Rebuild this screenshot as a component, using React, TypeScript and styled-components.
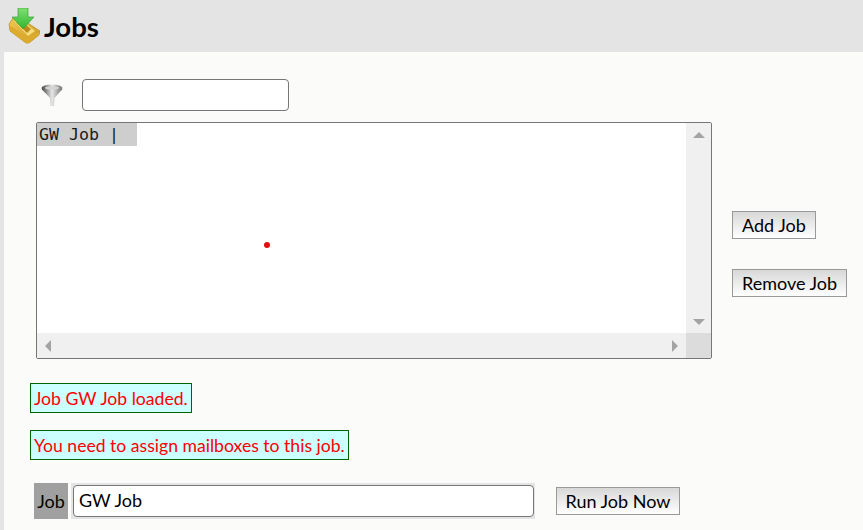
import styled, { createGlobalStyle } from 'styled-components';

const GlobalStyle = createGlobalStyle`
	html, body {
		margin: 0;
		padding: 0;
		background-color: #e4e4e4;
		font-family: Lato, 'Liberation Sans', sans-serif;
	}
`;

const Page = styled.div`
	width: 863px;
	height: 530px;
	overflow: hidden;
	display: flex;
	flex-direction: column;
`;

const Header = styled.div`
	height: 52px;
	display: flex;
	align-items: center;
	padding-left: 8px;
	gap: 4px;
	flex-shrink: 0;
`;

const Title = styled.h1`
	margin: 0;
	font-size: 27.5px;
	font-weight: 700;
	color: #000;
`;

const Content = styled.div`
	flex: 1;
	margin-left: 4px;
	background-color: #fbfbf9;
	padding: 27px 0 0 26px;
`;

const FilterRow = styled.div`
	display: flex;
	align-items: center;
	margin-left: 11px;
	gap: 17px;
	height: 32px;
`;

const TextInput = styled.input<{ $width: number; $height: number }>`
	box-sizing: border-box;
	width: ${(p) => p.$width}px;
	height: ${(p) => p.$height}px;
	border: 1px solid #767676;
	border-radius: 4px;
	background-color: #fff;
	padding: 0 5px 2px;
	font-family: Lato, sans-serif;
	font-size: 18px;
	color: #000;
	outline: none;
`;

const ListRow = styled.div`
	display: flex;
	align-items: center;
	margin: 11px 0 0 6px;
`;

const ListBox = styled.div`
	box-sizing: border-box;
	position: relative;
	width: 676px;
	height: 237px;
	border: 1px solid #767676;
	border-radius: 2px;
	background-color: #fff;
	display: grid;
	grid-template-columns: 1fr 25px;
	grid-template-rows: 1fr 25px;
`;

const ListArea = styled.div`
	overflow: hidden;
`;

const ListItem = styled.div`
	box-sizing: border-box;
	width: 100px;
	height: 23px;
	padding-left: 2px;
	line-height: 24px;
	background-color: #cecece;
	font-family: 'DejaVu Sans Mono', 'Liberation Mono', monospace;
	font-size: 16.6px;
	white-space: pre;
	color: #1a1a1a;
`;

const ScrollV = styled.div`
	background-color: #f0f0f0;
	display: flex;
	flex-direction: column;
	align-items: center;
	justify-content: space-between;
	padding: 9px 0 8px;
`;

const ScrollH = styled.div`
	background-color: #f0f0f0;
	display: flex;
	align-items: center;
	justify-content: space-between;
	padding: 0 8px;
`;

const Corner = styled.div`
	background-color: #dcdcdc;
`;

const Arrow = styled.span<{ $dir: 'up' | 'down' | 'left' | 'right' }>`
	width: 0;
	height: 0;
	border-style: solid;
	border-color: transparent;
	${(p) =>
		p.$dir === 'up'
			? 'border-width: 0 6px 6px; border-bottom-color: #a3a3a3;'
			: p.$dir === 'down'
			? 'border-width: 6px 6px 0; border-top-color: #a3a3a3;'
			: p.$dir === 'left'
			? 'border-width: 6px 6px 6px 0; border-right-color: #a3a3a3;'
			: 'border-width: 6px 0 6px 6px; border-left-color: #a3a3a3;'}
`;

const Dot = styled.span`
	position: absolute;
	left: 227px;
	top: 119px;
	width: 6px;
	height: 6px;
	border-radius: 50%;
	background-color: #e01010;
`;

const ActionColumn = styled.div`
	display: flex;
	flex-direction: column;
	align-items: flex-start;
	gap: 30px;
	margin: 27px 0 0 20px;
`;

const Button = styled.button`
	box-sizing: border-box;
	height: 28px;
	padding: 0 9px;
	border: 1px solid #999;
	border-radius: 0;
	background: linear-gradient(to bottom, #d8d8d8, #fff);
	font-family: Lato, sans-serif;
	font-size: 18px;
	color: #000;
`;

const Messages = styled.div`
	display: flex;
	flex-direction: column;
	align-items: flex-start;
	gap: 17px;
	margin-top: 24px;
`;

const Message = styled.div`
	box-sizing: border-box;
	height: 30px;
	padding: 0 3px;
	line-height: 29px;
	border: 1px solid #006400;
	background-color: #ccffff;
	color: #ff0000;
	font-size: 17.6px;
`;

const JobRow = styled.div`
	display: flex;
	align-items: center;
	margin: 23px 0 0 4px;
`;

const JobLabel = styled.div`
	width: 34px;
	height: 36px;
	line-height: 36px;
	text-align: center;
	background-color: #a0a0a0;
	color: #000;
	font-size: 18px;
`;

const JobField = styled.div`
	display: flex;
	padding: 2px 1px 2px 2px;
	margin-left: 3px;
	background-color: #e4e4e4;
`;

const RunButton = styled(Button)`
	margin-left: 21px;
	padding: 0 8.5px;
`;

const InboxIcon = () => (
	<svg width="32" height="36" viewBox="0 0 32 36">
		<defs>
			<linearGradient id="tray" x1="0" x2="1" y1="0" y2="1">
				<stop offset="0" stopColor="#f0c850" />
				<stop offset="1" stopColor="#c99a24" />
			</linearGradient>
			<linearGradient id="arrow" x1="0" x2="0" y1="0" y2="1">
				<stop offset="0" stopColor="#7fe070" />
				<stop offset="1" stopColor="#2fb52f" />
			</linearGradient>
		</defs>
		<path d="M1 16 L5 10 L12 10 L32 23 L31 27 L21 35 L18 35 L2 23 Z" fill="url(#tray)" stroke="#b8891f" strokeWidth="0.7" />
		<path d="M6 13 L12 11 L27 23 L20 28 Z" fill="#f7dc78" />
		<path d="M8 14 L13 13 L23 21 L19 25 Z" fill="#b98a1c" />
		<path d="M1 17 L19 29 L31 24 L31 27 L21 35 L18 35 L2 23 Z" fill="#dcaa2c" />
		<path d="M10 0 L20 0 L20 9 L26 9 L15 21 L4 9 L10 9 Z" fill="url(#arrow)" stroke="#38a838" strokeWidth="0.7" />
	</svg>
);

const FunnelIcon = () => (
	<svg width="24" height="24" viewBox="0 0 24 24">
		<defs>
			<linearGradient id="funnel" x1="0" x2="1" y1="0" y2="0">
				<stop offset="0" stopColor="#3f3f3f" />
				<stop offset="0.5" stopColor="#e8e8e8" />
				<stop offset="1" stopColor="#707070" />
			</linearGradient>
		</defs>
		<path d="M0.5 6 L9 15 L9.5 23 L13 23 L13.5 15 L21.5 6 Z" fill="url(#funnel)" />
		<ellipse cx="11" cy="5" rx="10.5" ry="3.5" fill="url(#funnel)" />
		<ellipse cx="11" cy="5" rx="7" ry="1.6" fill="#d4d4d4" />
	</svg>
);

const App = () => {
	return (
		<Page>
			<GlobalStyle />
			<Header>
				<InboxIcon />
				<Title>Jobs</Title>
			</Header>
			<Content>
				<FilterRow>
					<FunnelIcon />
					<TextInput $width={207} $height={32} />
				</FilterRow>
				<ListRow>
					<ListBox>
						<ListArea>
							<ListItem>
								GW Job <span>|</span>
							</ListItem>
						</ListArea>
						<ScrollV>
							<Arrow $dir="up" />
							<Arrow $dir="down" />
						</ScrollV>
						<ScrollH>
							<Arrow $dir="left" />
							<Arrow $dir="right" />
						</ScrollH>
						<Corner />
						<Dot />
					</ListBox>
					<ActionColumn>
						<Button>Add Job</Button>
						<Button>Remove Job</Button>
					</ActionColumn>
				</ListRow>
				<Messages>
					<Message>Job GW Job loaded.</Message>
					<Message>You need to assign mailboxes to this job.</Message>
				</Messages>
				<JobRow>
					<JobLabel>Job</JobLabel>
					<JobField>
						<TextInput $width={461} $height={32} defaultValue="GW Job" />
					</JobField>
					<RunButton>Run Job Now</RunButton>
				</JobRow>
			</Content>
		</Page>
	);
};

export default App;
